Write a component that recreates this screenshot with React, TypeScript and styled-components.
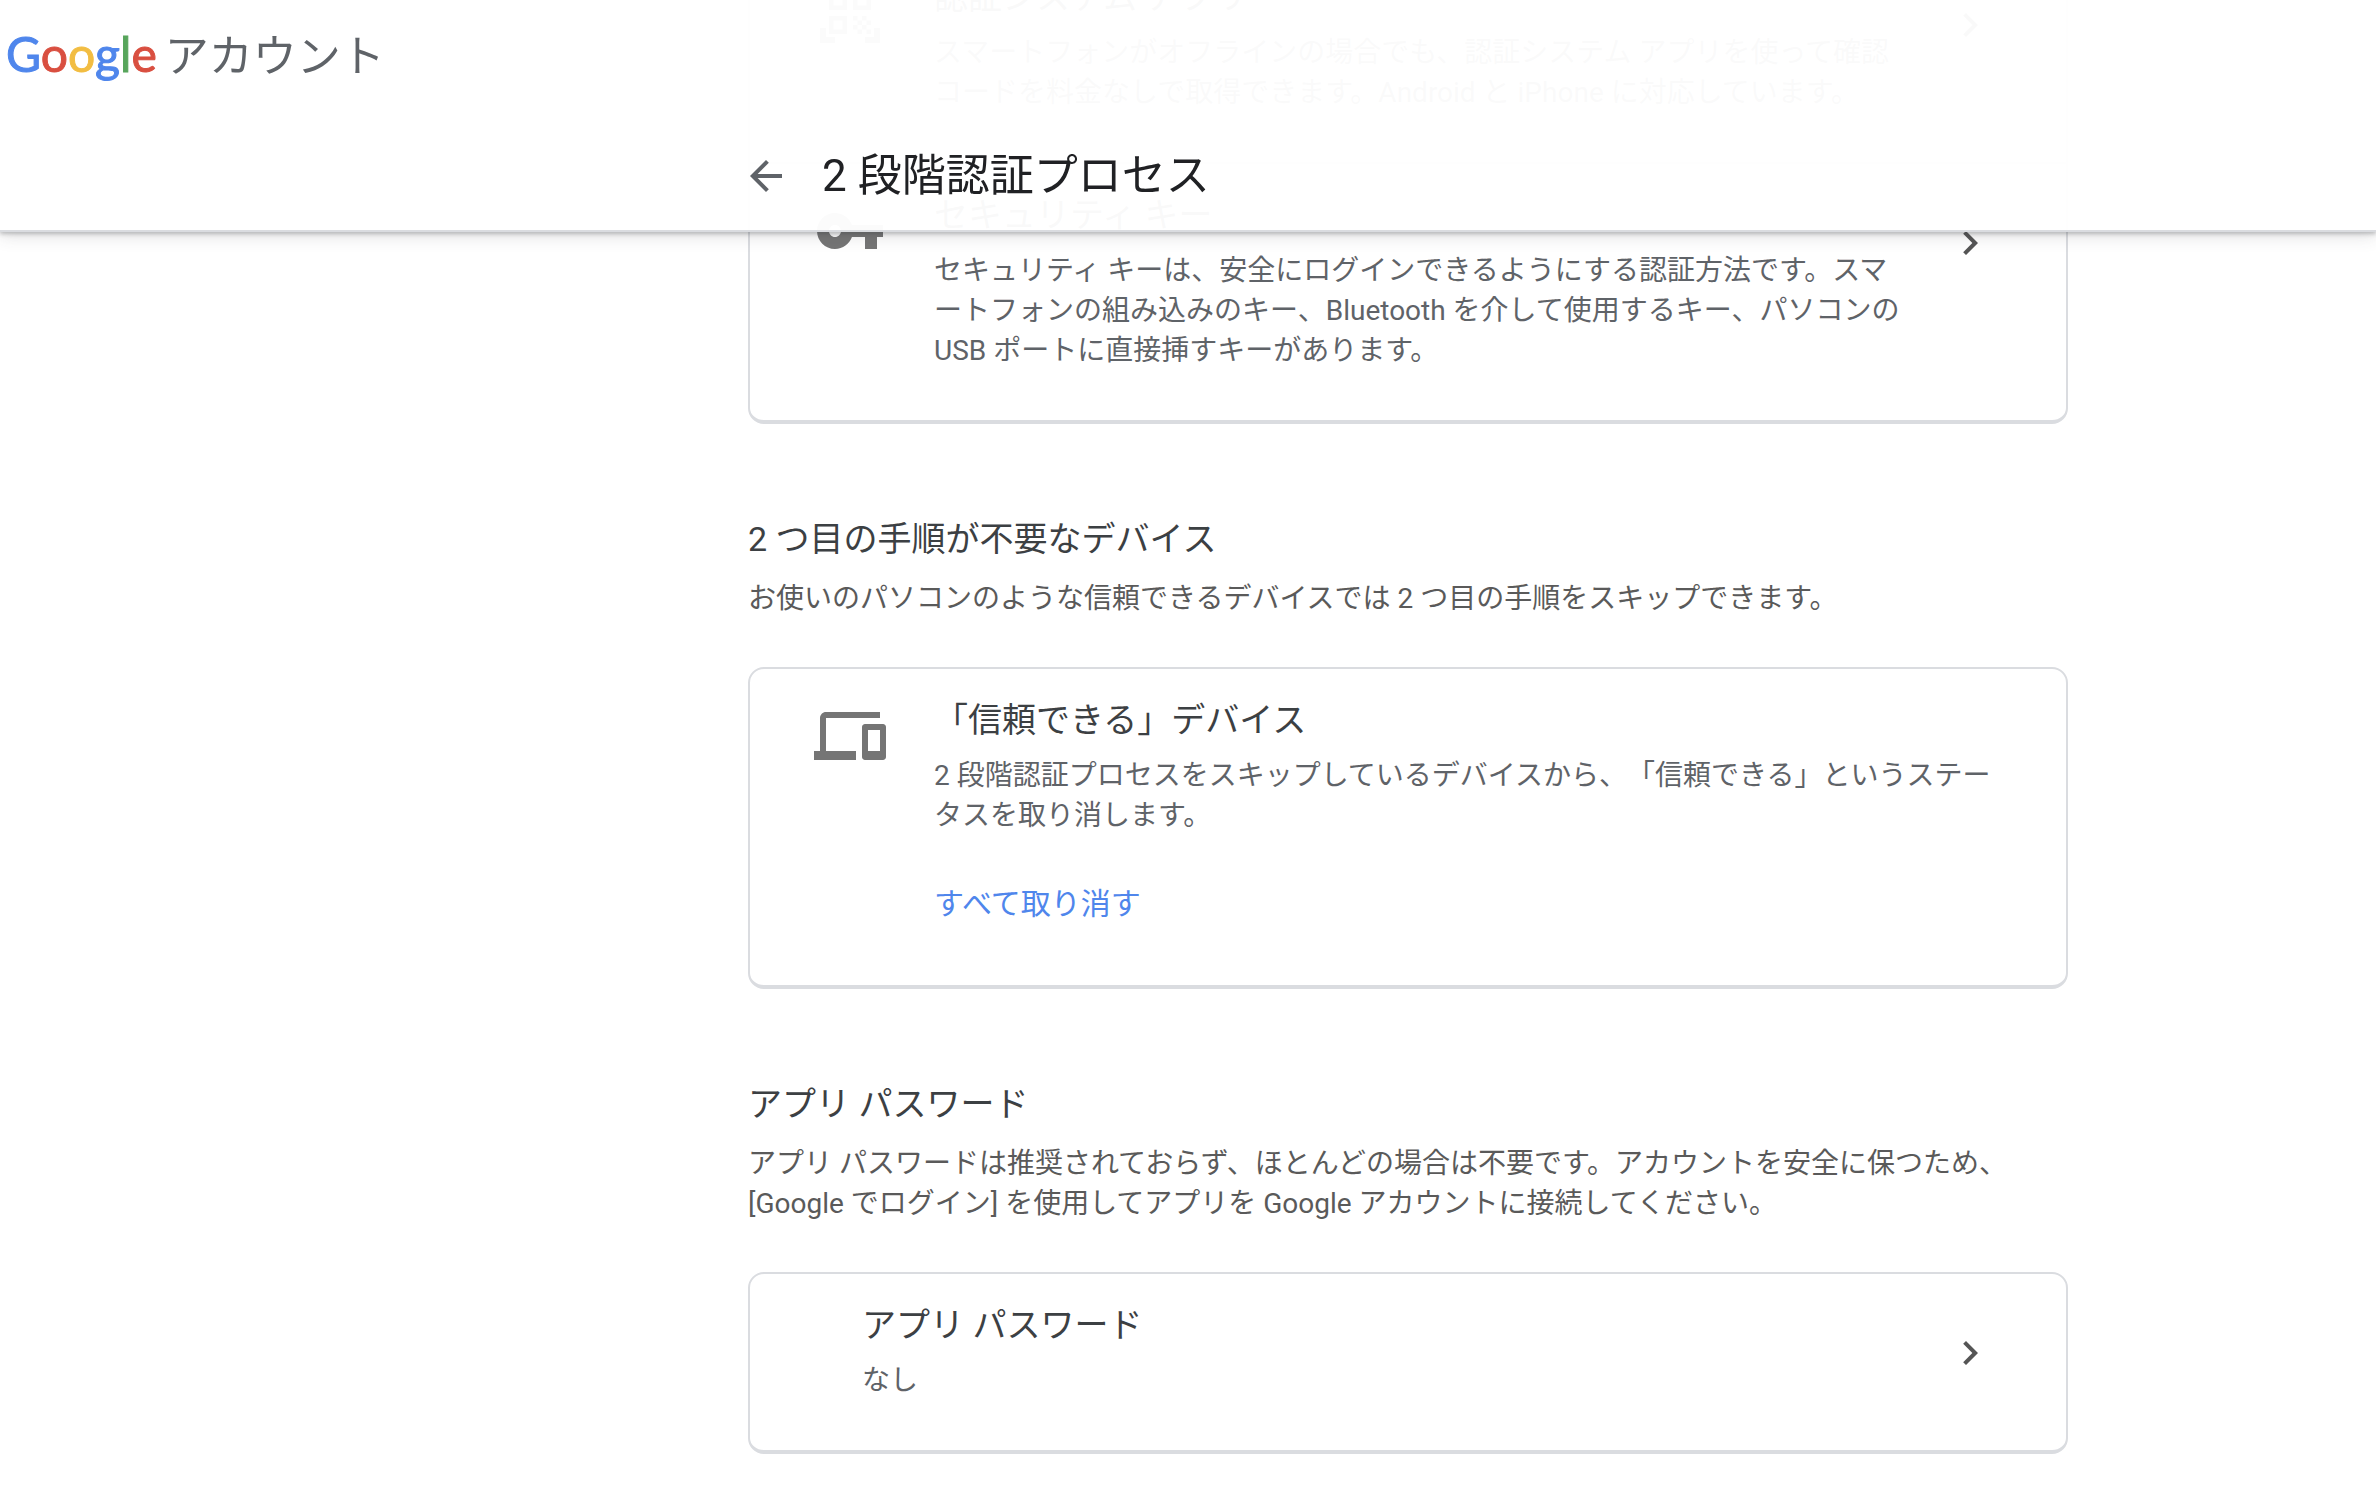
import React from "react";
import styled, { createGlobalStyle } from "styled-components";

const GlobalStyle = createGlobalStyle`
  * { box-sizing: border-box; }
  body {
    margin: 0;
    background: #fff;
    color: #5f6368;
    font-family: Roboto, "Noto Sans CJK JP", sans-serif;
    font-size: 28px;
    line-height: 40px;
    text-spacing-trim: space-all;
  }
`;

const Page = styled.div`
  min-height: 100vh;
  overflow: hidden;
`;

const Header = styled.header`
  position: fixed;
  inset: 0 0 auto 0;
  z-index: 1;
  background: rgba(255, 255, 255, 0.97);
  border-bottom: 2px solid #dadce0;
  box-shadow: 0 2px 4px rgba(60, 64, 67, 0.3), 0 4px 16px rgba(60, 64, 67, 0.16);
`;

const TopBar = styled.div`
  display: flex;
  align-items: center;
  height: 110px;
  padding-left: 6px;
`;

const Brand = styled.a`
  display: flex;
  align-items: baseline;
  gap: 8px;
  color: #5f6368;
  font-size: 44px;
  line-height: 60px;
  text-decoration: none;
`;

const Wordmark = styled.span`
  font-family: Lato, sans-serif;
  font-size: 48px;
  -webkit-text-stroke: 1px currentColor;
`;

const Letter = styled.span<{ $color: string }>`
  color: ${(p) => p.$color};
  -webkit-text-stroke-color: ${(p) => p.$color};
`;

const Column = styled.div`
  max-width: 1320px;
  margin: 0 auto;
`;

const Inset = styled.div`
  padding-left: 440px;
`;

const TitleBar = styled(Column)`
  display: flex;
  align-items: center;
  gap: 32px;
  height: 120px;
  padding-top: 12px;
`;

const BackButton = styled.button`
  display: flex;
  margin: 0 0 0 -6px;
  padding: 0;
  border: 0;
  background: none;
  color: #5f6368;
  cursor: pointer;
`;

const PageTitle = styled.h1`
  margin: 0;
  color: #202124;
  font-size: 44px;
  font-weight: 400;
  line-height: 60px;
`;

/* The list is scrolled so that its first card starts behind the header. */
const Content = styled.main`
  margin-top: -56px;
  padding: 0 0 36px 440px;
`;

const Section = styled.section`
  margin-top: 91px;
`;

const SectionTitle = styled.h2`
  margin: 0 0 16px;
  color: #3c4043;
  font-size: 34px;
  font-weight: 400;
  line-height: 48px;
`;

const SectionText = styled.p`
  margin: 0 0 48px;
  color: #5a5a5a;
`;

const Card = styled.div`
  border: 2px solid #dadce0;
  border-bottom-width: 4px;
  border-radius: 16px;
`;

const Row = styled.div<{ $inset?: boolean }>`
  display: flex;
  align-items: flex-start;
  gap: 48px;
  padding: 27px 72px 49px ${(p) => (p.$inset ? 112 : 64)}px;

  & + & {
    border-top: 2px solid #dadce0;
  }
`;

const LinkRow = styled(Row).attrs({ as: "a" })`
  color: inherit;
  text-decoration: none;
`;

const RowBody = styled.div`
  flex: 1;
  min-width: 0;
  white-space: nowrap;
`;

const RowTitle = styled.h3`
  margin: 0 0 12px;
  color: #3c4043;
  font-size: 34px;
  font-weight: 400;
  line-height: 48px;
`;

const RowText = styled.p`
  margin: 0;
`;

const TextButton = styled.button`
  display: block;
  margin: 48px 0 12px;
  padding: 0;
  border: 0;
  background: none;
  color: #4f86ec;
  font: inherit;
  font-size: 30px;
  line-height: 40px;
  cursor: pointer;
`;

const Icon = styled.svg<{ $size: number; $top?: number }>`
  display: block;
  flex: none;
  width: ${(p) => p.$size}px;
  height: ${(p) => p.$size}px;
  margin-top: ${(p) => p.$top ?? 0}px;
  fill: currentColor;
`;

const RowIcon = styled(Icon).attrs({ $size: 72, $top: 4 })`
  color: #757575;
`;

const ChevronIcon = styled(Icon).attrs({ $size: 48, $top: 28 })`
  color: #555;
`;

const paths = {
  back: "M20 11H7.83l5.59-5.59L12 4l-8 8 8 8 1.41-1.41L7.83 13H20v-2z",
  chevron: "M8.59 16.59L13.17 12 8.59 7.41 10 6l6 6-6 6z",
  key: "M12.65 10C11.83 7.67 9.61 6 7 6c-3.31 0-6 2.69-6 6s2.69 6 6 6c2.61 0 4.83-1.67 5.65-4H17v4h4v-4h2v-4H12.65zM7 14c-1.1 0-2-.9-2-2s.9-2 2-2 2 .9 2 2-.9 2-2 2z",
  devices:
    "M4 6h18V4H4c-1.1 0-2 .9-2 2v11H0v3h14v-3H4V6zm19 2h-6c-.55 0-1 .45-1 1v10c0 .55.45 1 1 1h6c.55 0 1-.45 1-1V9c0-.55-.45-1-1-1zm-1 9h-4v-7h4v7z",
  qr: "M9.5 6.5v3h-3v-3h3M11 5H5v6h6V5zm-1.5 9.5v3h-3v-3h3M11 13H5v6h6v-6zm6.5-6.5v3h-3v-3h3M19 5h-6v6h6V5zm-6 8h1.5v1.5H13V13zm1.5 1.5H16V16h-1.5v-1.5zM16 13h1.5v1.5H16V13zm-3 3h1.5v1.5H13V16zm1.5 1.5H16V19h-1.5v-1.5zM16 16h1.5v1.5H16V16zm1.5-1.5H19V16h-1.5v-1.5zm0 3H19V19h-1.5v-1.5zM22 7h-2V4h-3V2h5v5zm0 15v-5h-2v3h-3v2h5zM2 22h5v-2H4v-3H2v5zM2 2v5h2V4h3V2H2z",
};

const letters: [string, string][] = [
  ["G", "#4f86ec"],
  ["o", "#d94f40"],
  ["o", "#f2bd42"],
  ["g", "#4f86ec"],
  ["l", "#58a55c"],
  ["e", "#d94f40"],
];

function Chevron() {
  return (
    <ChevronIcon viewBox="0 0 24 24" aria-hidden="true">
      <path d={paths.chevron} />
    </ChevronIcon>
  );
}

export default function App() {
  return (
    <Page lang="ja">
      <GlobalStyle />
      <Header>
        <TopBar>
          <Brand href="#">
            <Wordmark>
              {letters.map(([char, color], i) => (
                <Letter key={i} $color={color}>
                  {char}
                </Letter>
              ))}
            </Wordmark>
            アカウント
          </Brand>
        </TopBar>
        <Inset>
          <TitleBar>
            <BackButton type="button" aria-label="戻る">
              <Icon $size={48} viewBox="0 0 24 24" aria-hidden="true">
                <path d={paths.back} />
              </Icon>
            </BackButton>
            <PageTitle>2 段階認証プロセス</PageTitle>
          </TitleBar>
        </Inset>
      </Header>

      <Content>
        <Column>
          <Card>
            <LinkRow href="#">
              <RowIcon viewBox="0 0 24 24" aria-hidden="true">
                <path d={paths.qr} />
              </RowIcon>
              <RowBody>
                <RowTitle>認証システム アプリ</RowTitle>
                <RowText>
                  スマートフォンがオフラインの場合でも、認証システム アプリを使って確認
                  <br />
                  コードを料金なしで取得できます。Android と iPhone に対応しています。
                </RowText>
              </RowBody>
              <Chevron />
            </LinkRow>
            <LinkRow href="#">
              <RowIcon viewBox="0 0 24 24" aria-hidden="true">
                <path d={paths.key} />
              </RowIcon>
              <RowBody>
                <RowTitle>セキュリティ キー</RowTitle>
                <RowText>
                  セキュリティ キーは、安全にログインできるようにする認証方法です。スマ
                  <br />
                  ートフォンの組み込みのキー、Bluetooth を介して使用するキー、パソコンの
                  <br />
                  USB ポートに直接挿すキーがあります。
                </RowText>
              </RowBody>
              <Chevron />
            </LinkRow>
          </Card>

          <Section>
            <SectionTitle>2 つ目の手順が不要なデバイス</SectionTitle>
            <SectionText>
              お使いのパソコンのような信頼できるデバイスでは 2 つ目の手順をスキップできます。
            </SectionText>
            <Card>
              <Row>
                <RowIcon viewBox="0 0 24 24" aria-hidden="true">
                  <path d={paths.devices} />
                </RowIcon>
                <RowBody>
                  <RowTitle>「信頼できる」デバイス</RowTitle>
                  <RowText>
                    2 段階認証プロセスをスキップしているデバイスから、「信頼できる」というステー
                    <br />
                    タスを取り消します。
                  </RowText>
                  <TextButton type="button">すべて取り消す</TextButton>
                </RowBody>
              </Row>
            </Card>
          </Section>

          <Section>
            <SectionTitle>アプリ パスワード</SectionTitle>
            <SectionText>
              アプリ パスワードは推奨されておらず、ほとんどの場合は不要です。アカウントを安全に保つため、
              <br />
              [Google でログイン] を使用してアプリを Google アカウントに接続してください。
            </SectionText>
            <Card>
              <LinkRow href="#" $inset>
                <RowBody>
                  <RowTitle>アプリ パスワード</RowTitle>
                  <RowText>なし</RowText>
                </RowBody>
                <Chevron />
              </LinkRow>
            </Card>
          </Section>
        </Column>
      </Content>
    </Page>
  );
}
